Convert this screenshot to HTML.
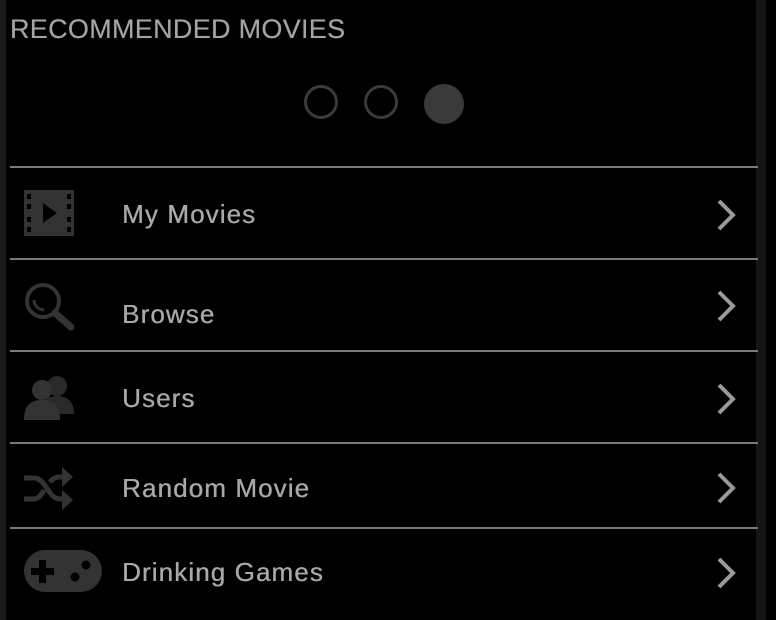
<!DOCTYPE html>
<html><head><style>
body{margin:0;width:776px;height:620px;background:#000;overflow:hidden;position:relative;font-family:"Liberation Sans",Arial,sans-serif;}
.lb{position:absolute;left:0;top:0;width:6px;height:620px;background:#1a1a1a}
.rb{position:absolute;left:756px;top:0;width:10px;height:620px;background:#141414}
h1{position:absolute;left:10px;top:14px;margin:0;font-size:27px;font-weight:normal;color:#a3a3a3;letter-spacing:0.3px;text-shadow:0 0 0.5px #a3a3a3}
.dot{position:absolute;top:85px;width:34px;height:34px;border-radius:50%;border:3px solid #3a3a3a;box-sizing:border-box}
.line{position:absolute;left:10px;width:748px;height:2px;background:#7a7a7a}
.t{position:absolute;left:122px;font-size:26px;color:#a8a8a8;line-height:30px;letter-spacing:1.1px;text-shadow:0.4px 0 0 #a8a8a8}
.ch{position:absolute;left:713px}
svg{position:absolute}
</style></head><body>
<div class="lb"></div><div class="rb"></div>
<h1>RECOMMENDED MOVIES</h1>
<div class="dot" style="left:304px"></div>
<div class="dot" style="left:364px"></div>
<div class="dot" style="left:424px;background:#3a3a3a;border:none;top:84px;width:40px;height:40px"></div>
<div class="line" style="top:166px"></div>
<div class="line" style="top:258px"></div>
<div class="line" style="top:350px"></div>
<div class="line" style="top:442px"></div>
<div class="line" style="top:527px"></div>

<svg style="left:24px;top:190px" width="50" height="46" viewBox="0 0 50 46"><path fill="#333" fill-rule="evenodd" d="M0 0H50V46H0Z M3 4h4v5h-4z M3 14h4v5h-4z M3 27h4v5h-4z M3 37h4v5h-4z M43 4h4v5h-4z M43 14h4v5h-4z M43 27h4v5h-4z M43 37h4v5h-4z M19 13L33 23L19 33Z"/></svg>
<div class="t" style="top:199px">My Movies</div>

<svg style="left:24px;top:282px" width="52" height="50" viewBox="0 0 52 50"><circle cx="19" cy="19" r="16" fill="none" stroke="#333" stroke-width="4"/><path d="M10 18a10 10 0 0 0 10 10" fill="none" stroke="#333" stroke-width="3"/><path d="M31 31L47 45" stroke="#333" stroke-width="7" stroke-linecap="round"/></svg>
<div class="t" style="top:299px">Browse</div>

<svg style="left:24px;top:374px" width="52" height="48" viewBox="0 0 52 48"><circle cx="33" cy="12" r="10" fill="#2a2a2a"/><path d="M18 40c0-14 6-18 15-18s17 4 17 18z" fill="#2a2a2a"/><circle cx="18" cy="16" r="10" fill="#333"/><path d="M0 46c0-14 6-20 18-20s18 6 18 20z" fill="#333"/></svg>
<div class="t" style="top:383px">Users</div>

<svg style="left:24px;top:465px" width="50" height="46" viewBox="0 0 50 46"><path d="M0 13h10c12 0 14 21 26 21h4 M0 34h10c5 0 8-5 10-9 M26 17c2-3 5-5 10-5h4" fill="none" stroke="#333" stroke-width="5"/><path d="M38 2l11 10l-11 10z M38 25l11 10l-11 10z" fill="#333"/></svg>
<div class="t" style="top:473px">Random Movie</div>

<svg style="left:24px;top:550px" width="78" height="42" viewBox="0 0 78 42"><rect x="0" y="0" width="78" height="42" rx="21" fill="#333"/><path d="M7 18h8v-8h7v8h8v7h-8v8h-7v-8h-8z" fill="#000"/><circle cx="62" cy="15" r="4.5" fill="#000"/><circle cx="51" cy="27" r="4.5" fill="#000"/></svg>
<div class="t" style="top:557px">Drinking Games</div>

<svg class="ch" style="top:197px" width="26" height="36"><path d="M6 4L20 18L6 32" fill="none" stroke="#999" stroke-width="4"/></svg>
<svg class="ch" style="top:288px" width="26" height="36"><path d="M6 4L20 18L6 32" fill="none" stroke="#999" stroke-width="4"/></svg>
<svg class="ch" style="top:381px" width="26" height="36"><path d="M6 4L20 18L6 32" fill="none" stroke="#999" stroke-width="4"/></svg>
<svg class="ch" style="top:470px" width="26" height="36"><path d="M6 4L20 18L6 32" fill="none" stroke="#999" stroke-width="4"/></svg>
<svg class="ch" style="top:555px" width="26" height="36"><path d="M6 4L20 18L6 32" fill="none" stroke="#999" stroke-width="4"/></svg>
</body></html>
